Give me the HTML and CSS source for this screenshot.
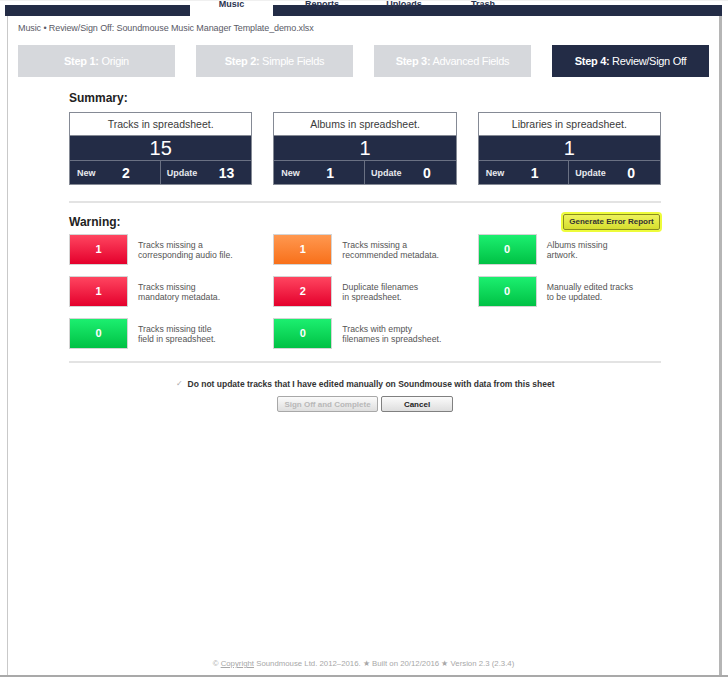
FILE: index.html
```html
<!DOCTYPE html>
<html lang="en">
<head>
<meta charset="utf-8">
<title>Review/Sign Off</title>
<link rel="stylesheet" href="styles.css">
</head>
<body>
<div class="screen">
  <nav class="nav">
    <span class="tab tab-music active">Music</span>
    <span class="tab tab-reports">Reports</span>
    <span class="tab tab-uploads">Uploads</span>
    <span class="tab tab-trash">Trash</span>
  </nav>
  <div class="window">
    <div class="crumb">Music &bull; Review/Sign Off: Soundmouse Music Manager Template_demo.xlsx</div>
    <div class="steps">
      <div class="step"><b>Step 1:</b> Origin</div>
      <div class="step"><b>Step 2:</b> Simple Fields</div>
      <div class="step"><b>Step 3:</b> Advanced Fields</div>
      <div class="step current"><b>Step 4:</b> Review/Sign Off</div>
    </div>
    <div class="content">
      <h2 class="label">Summary:</h2>
      <div class="cards">
        <div class="card">
          <div class="card-head">Tracks in spreadsheet.</div>
          <div class="card-total">15</div>
          <div class="card-split">
            <div class="half left"><span class="k">New</span><span class="v">2</span></div>
            <div class="half right"><span class="k">Update</span><span class="v">13</span></div>
          </div>
        </div>
        <div class="card">
          <div class="card-head">Albums in spreadsheet.</div>
          <div class="card-total">1</div>
          <div class="card-split">
            <div class="half left"><span class="k">New</span><span class="v">1</span></div>
            <div class="half right"><span class="k">Update</span><span class="v">0</span></div>
          </div>
        </div>
        <div class="card">
          <div class="card-head">Libraries in spreadsheet.</div>
          <div class="card-total">1</div>
          <div class="card-split">
            <div class="half left"><span class="k">New</span><span class="v">1</span></div>
            <div class="half right"><span class="k">Update</span><span class="v">0</span></div>
          </div>
        </div>
      </div>
      <hr class="rule rule-a">
      <div class="warn-head">
        <h2 class="label">Warning:</h2>
        <button class="gen-btn">Generate Error Report</button>
      </div>
      <div class="warnings">
        <div class="warn"><span class="count red">1</span><span class="desc">Tracks missing a<br>corresponding audio file.</span></div>
        <div class="warn"><span class="count orange">1</span><span class="desc">Tracks missing a<br>recommended metadata.</span></div>
        <div class="warn"><span class="count green">0</span><span class="desc">Albums missing<br>artwork.</span></div>
        <div class="warn"><span class="count red">1</span><span class="desc">Tracks missing<br>mandatory metadata.</span></div>
        <div class="warn"><span class="count red">2</span><span class="desc">Duplicate filenames<br>in spreadsheet.</span></div>
        <div class="warn"><span class="count green">0</span><span class="desc">Manually edited tracks<br>to be updated.</span></div>
        <div class="warn"><span class="count green">0</span><span class="desc">Tracks missing title<br>field in spreadsheet.</span></div>
        <div class="warn"><span class="count green">0</span><span class="desc">Tracks with empty<br>filenames in spreadsheet.</span></div>
      </div>
      <hr class="rule rule-b">
      <div class="check-row">
        <span class="checkbox">&#10003;</span>
        <span class="check-text">Do not update tracks that I have edited manually on Soundmouse with data from this sheet</span>
      </div>
      <div class="actions">
        <button class="btn disabled">Sign Off and Complete</button>
        <button class="btn">Cancel</button>
      </div>
    </div>
    <footer class="footer">&copy; <u>Copyright</u> Soundmouse Ltd. 2012&ndash;2016. &#9733; Built on 20/12/2016 &#9733; Version 2.3 (2.3.4)</footer>
  </div>
  <div class="edge"></div>
</div>
</body>
</html>
```
FILE: styles.css
```css
* { box-sizing: border-box; }
html, body { margin: 0; padding: 0; background: #fff; }
body { font-family: "Liberation Sans", Arial, sans-serif; color: #333; }

.screen {
  width: 728px;
  height: 677px;
  display: flex;
  flex-direction: column;
  border-top: 1px solid #f0f0f0;
  overflow: hidden;
}

/* top navigation */
.nav {
  margin: 4px 6px 0 5px;
  height: 11px;
  background: #232c46;
  display: flex;
  padding-left: 185px;
}
.tab {
  height: 16px;
  margin-top: -5px;
  font-size: 9px;
  font-weight: bold;
  line-height: 9px;
  text-align: center;
  color: #2b3450;
}
.tab.active { background: #fff; color: #2b3450; }
.tab-music { width: 83px; }
.tab-reports { width: 98px; }
.tab-uploads { width: 66px; }
.tab-trash { width: 92px; }

/* window frame */
.window {
  flex: 1;
  margin: 0 6px 0 7px;
  border-left: 1px solid #c9c9c9;
  border-right: 3px solid #b5b5b5;
  display: flex;
  flex-direction: column;
}
.edge { height: 2px; background: #a9a9a9; }

.crumb {
  padding: 6px 0 0 10px;
  font-size: 9px;
  line-height: 12px;
  color: #5a5a66;
  letter-spacing: -0.1px;
}

.steps {
  margin-top: 11px;
  padding-left: 10px;
  display: flex;
  gap: 21px;
}
.step {
  width: 157px;
  height: 32px;
  background: #d6d8dc;
  color: #fff;
  font-size: 11px;
  line-height: 32px;
  text-align: center;
  letter-spacing: -0.3px;
}
.step.current { background: #232c46; }

.content {
  margin-left: 61px;
  width: 592px;
}
.label {
  margin: 0;
  font-size: 12px;
  font-weight: bold;
  color: #222;
  line-height: 14px;
}
.content > .label { margin-top: 14px; margin-bottom: 7px; }

.cards {
  display: grid;
  grid-template-columns: repeat(3, 1fr);
  column-gap: 21px;
}
.card {
  border: 1px solid #858a95;
  background: #232c46;
}
.card-head {
  background: #fff;
  height: 23px;
  line-height: 23px;
  text-align: center;
  font-size: 10.5px;
  color: #3a3a3a;
  border-bottom: 1px solid #858a95;
}
.card-total {
  height: 25px;
  line-height: 25px;
  text-align: center;
  font-size: 20px;
  color: #fff;
  border-bottom: 1px solid #6a7183;
}
.card-split {
  display: grid;
  grid-template-columns: 1fr 1fr;
  height: 23px;
}
.half {
  display: flex;
  align-items: center;
  color: #fff;
}
.half.left { padding-left: 7px; border-right: 1px solid #6a7183; }
.half.right { padding-left: 6px; }
.half .k { font-size: 9px; font-weight: bold; color: #e8e9ee; }
.half.left .k { width: 45px; }
.half.right .k { width: 52px; }
.half .v { font-size: 14px; font-weight: bold; }

.rule {
  border: 0;
  height: 2px;
  background: #e3e3e3;
  margin: 0;
}
.rule-a { margin-top: 16px; }

.warn-head {
  margin-top: 9px;
  height: 19px;
  display: flex;
  justify-content: space-between;
  align-items: center;
}
.gen-btn {
  font-family: inherit;
  font-size: 8px;
  font-weight: bold;
  color: #333;
  background: linear-gradient(#eef35c, #d6de2e);
  border: 1px solid #8a8d1c;
  border-radius: 2px;
  box-shadow: 0 0 0 2px #eefc3a;
  height: 16px;
  width: 97px;
  padding: 0;
  margin-right: 1px;
}

.warnings {
  margin-top: 3px;
  display: grid;
  grid-template-columns: repeat(3, 1fr);
  column-gap: 21px;
  row-gap: 11px;
}
.warn {
  display: flex;
  align-items: center;
  gap: 10px;
  height: 31px;
}
.count {
  flex: none;
  width: 59px;
  height: 31px;
  line-height: 29px;
  text-align: center;
  color: #fff;
  font-size: 11px;
  font-weight: bold;
  border: 1px solid #d4d4d4;
}
.count.red { background: linear-gradient(#ff4560, #e4002c); }
.count.orange { background: linear-gradient(#ff9850, #f8701a); }
.count.green { background: linear-gradient(#1cef70, #00c144); }
.desc {
  font-size: 8.7px;
  line-height: 10px;
  color: #555;
}

.rule-b { margin-top: 12px; }

.check-row {
  margin-top: 15px;
  display: flex;
  justify-content: center;
  align-items: center;
  gap: 4px;
  height: 12px;
}
.checkbox {
  width: 8px;
  height: 8px;
  font-size: 8px;
  line-height: 8px;
  color: #aaa;
  text-align: center;
}
.check-text {
  font-size: 8.5px;
  font-weight: bold;
  color: #333;
}

.actions {
  margin-top: 6px;
  display: flex;
  justify-content: center;
  gap: 3px;
}
.btn {
  font-family: inherit;
  font-size: 8px;
  font-weight: bold;
  color: #222;
  height: 16px;
  padding: 0;
  width: 72px;
  background: linear-gradient(#fbfbfb, #dedede);
  border: 1px solid #808080;
  border-radius: 2px;
}
.btn.disabled { width: 101px; color: #b8b8b8; border-color: #a8a8a8; }

.footer {
  margin-top: auto;
  padding-bottom: 6px;
  text-align: center;
  font-size: 7.8px;
  line-height: 10px;
  color: #a8a8a8;
}
```
